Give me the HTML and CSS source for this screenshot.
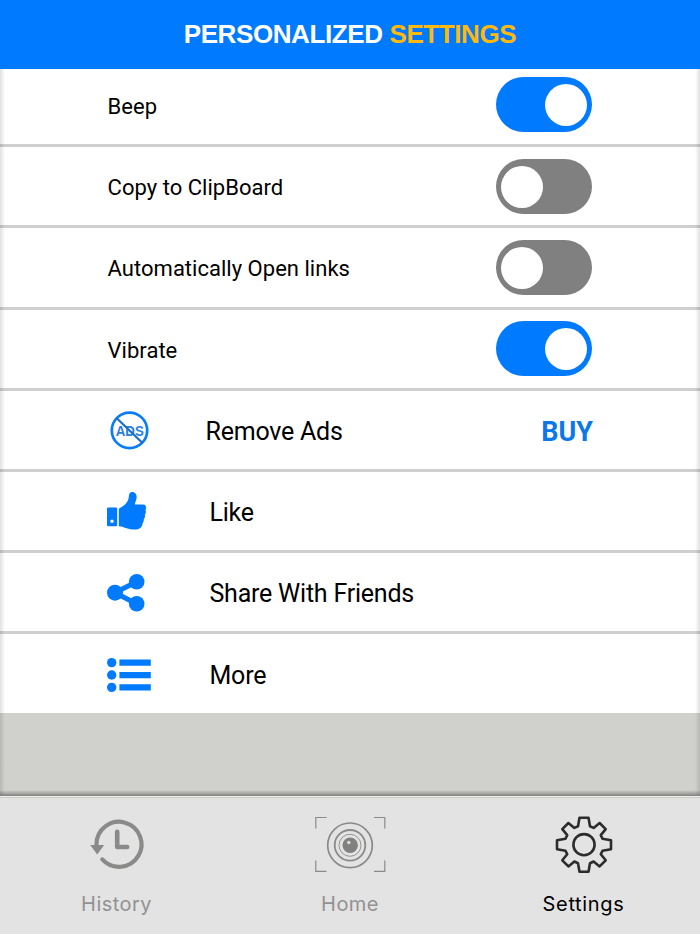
FILE: index.html
```html
<!DOCTYPE html>
<html lang="en">
<head>
<meta charset="UTF-8">
<meta name="viewport" content="width=device-width, initial-scale=1.0">
<title>Personalized Settings</title>
<link rel="stylesheet" href="styles.css">
</head>
<body>
  <div id="screen">
    <header>
      <h1>PERSONALIZED <span>SETTINGS</span></h1>
    </header>

    <div id="settings">
      <div class="row first">
        <span class="label">Beep</span>
        <div class="switch on"></div>
      </div>
      <div class="row">
        <span class="label">Copy to ClipBoard</span>
        <div class="switch"></div>
      </div>
      <div class="row">
        <span class="label">Automatically Open links</span>
        <div class="switch"></div>
      </div>
      <div class="row">
        <span class="label">Vibrate</span>
        <div class="switch on"></div>
      </div>
      <div class="row menu">
        <svg class="icon" width="50" height="44" viewBox="0 0 50 44">
          <circle cx="22.5" cy="21.4" r="17.7" fill="none" stroke="#0a7cf5" stroke-width="2.7"/>
          <text x="8.8" y="26.6" textLength="28" lengthAdjust="spacingAndGlyphs" class="ads">ADS</text>
          <path d="M9.5 9L35.5 34" stroke="#1a6fc9" stroke-width="2.2"/>
        </svg>
        <span class="item ads-item">Remove Ads</span>
        <span class="buy">BUY</span>
      </div>
      <div class="row menu">
        <svg class="icon" width="50" height="44" viewBox="0 0 50 44" fill="#007bff">
          <path fill-rule="evenodd" d="M1.2 17.5H9a1.2 1.2 0 0 1 1.2 1.2V35a1.2 1.2 0 0 1-1.2 1.2H1.2A1.2 1.2 0 0 1 0 35V18.7a1.2 1.2 0 0 1 1.2-1.2zM5 29.6a1.7 1.7 0 1 0 0 3.4a1.7 1.7 0 0 0 0-3.4z"/>
          <path d="M11.8 19.2Q12 18 13.8 17.5C17 16 20.6 12 21.3 9.5C22.3 7.5 21.2 2 25 2C29.8 2 30.4 6.8 29 10.5C28 13 27.8 13.8 28.2 14.5H36C39 14.5 39.5 17.4 38.8 19C38.2 20 39.2 21 38.7 23C38.3 24.3 37.6 24.4 38 26C38.2 28.2 36.6 28.8 36.7 30C37 32 35.8 32.6 35.5 34C34.8 38 32 39.5 28 39.5C21 39.5 18 37 11.8 36.2z"/>
        </svg>
        <span class="item">Like</span>
      </div>
      <div class="row menu">
        <svg class="icon" width="50" height="44" viewBox="0 0 50 44" fill="#007bff">
          <path d="M29.5 10.7L8 21.7L29.5 32.7" fill="none" stroke="#007bff" stroke-width="5"/>
          <circle cx="8" cy="21.7" r="8"/>
          <circle cx="29.7" cy="10.7" r="7.8"/>
          <circle cx="29.7" cy="32.7" r="7.8"/>
        </svg>
        <span class="item">Share With Friends</span>
      </div>
      <div class="row menu last">
        <svg class="icon" width="50" height="44" viewBox="0 0 50 44" fill="#007bff">
          <circle cx="4.7" cy="9.6" r="4.7"/>
          <circle cx="4.7" cy="22" r="4.7"/>
          <circle cx="4.7" cy="34.4" r="4.7"/>
          <path d="M12.4 6.4h31.4v6.4H12.4zM12.4 18.9h31.4v6.3H12.4zM12.4 31.2h31.4v6.4H12.4z"/>
        </svg>
        <span class="item">More</span>
      </div>
    </div>

    <div id="shade"></div>
  </div>

  <nav>
    <a class="tab">
      <svg width="80" height="64" viewBox="1 0 80 64">
        <path d="M21.5 32A22.5 22.5 0 1 1 27.3 46.9" transform="translate(-1 .5)" fill="none" stroke="#8a8a88" stroke-width="4.2" stroke-linecap="round"/>
        <path d="M14.2 33H28.2L21.2 42.5z" fill="#8a8a88"/>
        <path d="M41.2 19.7V35H51.2" fill="none" stroke="#8a8a88" stroke-width="4.6" stroke-linecap="round" stroke-linejoin="round"/>
      </svg>
      <span>History</span>
    </a>
    <a class="tab">
      <svg width="80" height="64" viewBox="0 0 80 64" fill="none" stroke="#8a8a88">
        <path d="M5.8 16.5V5.5H16.5M64 5.5H74.8V16.5M74.8 48.5V59.3H64M16.5 59.3H5.8V48.5" stroke-width="1.2"/>
        <circle cx="40" cy="33.3" r="22.3" stroke-width="1.7"/>
        <circle cx="40" cy="33.3" r="15.3" stroke-width="1.8"/>
        <circle cx="40" cy="33.3" r="11" stroke-width=".9"/>
        <circle cx="40.2" cy="33.3" r="7.7" fill="#80807e" stroke="none"/>
        <circle cx="38.8" cy="30.5" r="1.7" fill="#ddd" stroke="none"/>
      </svg>
      <span>Home</span>
    </a>
    <a class="tab active">
      <svg width="80" height="64" viewBox="-40 -32.7 80 64" fill="none" stroke="#2c2c2c" stroke-width="2.6" stroke-linejoin="round">
        <path d="M-4.5-27H4.5L6-18.5L9.6-16.8L15.6-21.7L21.7-15.6L16.8-9.6L18.5-6L27-4.5V4.5L18.5 6L16.8 9.6L21.7 15.6L15.6 21.7L9.6 16.8L6 18.5L4.5 27H-4.5L-6 18.5L-9.6 16.8L-15.6 21.7L-21.7 15.6L-16.8 9.6L-18.5 6L-27 4.5V-4.5L-18.5-6L-16.8-9.6L-21.7-15.6L-15.6-21.7L-9.6-16.8L-6-18.5z"/>
        <circle r="10.6"/>
      </svg>
      <span>Settings</span>
    </a>
  </nav>
</body>
</html>
```

FILE: styles.css
```css
* {
  box-sizing: border-box;
}
body {
  margin: 0;
  width: 700px;
  height: 934px;
  overflow: hidden;
  font-family: Roboto, Arial, sans-serif;
  background-color: #e3e3e3;
  color: #000;
}
#screen {
  position: relative;
  height: 796px;
  background-color: #d0d1cc;
}
header {
  height: 69px;
  background-color: #007bff;
  display: flex;
  justify-content: center;
}
h1 {
  margin: 0;
  font-family: "Liberation Sans", Arial, sans-serif;
  font-size: 26px;
  letter-spacing: -0.4px;
  line-height: 68px;
  color: #fff;
  white-space: nowrap;
}
h1 span {
  color: #ffb80c;
}
.row {
  height: 81.2px;
  border-bottom: 3px solid #cfcfcf;
  background-color: #fff;
  padding: 0 107px;
  display: flex;
  align-items: center;
}
.first {
  height: 78.2px;
  padding-bottom: 4px;
}
.menu {
  padding-top: 2px;
}
.last {
  height: 78.5px;
  border-bottom: none;
}
.label {
  flex: 1;
  font-size: 22px;
  padding-top: 3px;
  padding-left: 0.6px;
  letter-spacing: 0.02px;
}
.switch {
  width: 96px;
  height: 55px;
  border-radius: 28px;
  background-color: #808080;
  padding: 7px 5px;
  margin-right: 1px;
  display: flex;
}
.switch::before {
  content: "";
  width: 42px;
  height: 42px;
  border-radius: 50%;
  background-color: #fff;
}
.switch.on {
  background-color: #007bff;
  justify-content: flex-end;
}
.icon {
  width: 50px;
  margin-right: 52.5px;
}
.ads {
  font: bold 14.5px "Liberation Sans", Arial, sans-serif;
  fill: #2a7fdc;
}
.item {
  flex: 1;
  font-size: 25px;
  letter-spacing: -0.22px;
  padding-top: 1px;
}
.ads-item {
  margin-left: -4px;
}
.buy {
  font-size: 27px;
  font-weight: bold;
  color: #0a78e8;
  padding-top: 3px;
}
/* soft edge round the list */
#shade {
  position: absolute;
  top: 69px;
  right: 0;
  bottom: 0;
  left: 0;
  pointer-events: none;
  border-bottom: 1px solid #858583;
  background:
    linear-gradient(to right, rgba(0, 0, 0, .12), transparent 5px),
    linear-gradient(to left, rgba(0, 0, 0, .12), transparent 5px),
    linear-gradient(to top, rgba(0, 0, 0, .3), transparent 5px);
}
nav {
  height: 138px;
  border-top: 1px solid #f0f0ee;
  box-shadow: inset 0 1px #cbcbc6;
  padding: 15px 0 0;
  display: grid;
  grid-template-columns: 233px 234px 233px;
}
.tab {
  display: flex;
  flex-direction: column;
  align-items: center;
  font-family: Inter, Arial, sans-serif;
  font-size: 20px;
  letter-spacing: 0.45px;
  color: #929292;
}
.tab span {
  line-height: 24px;
  margin-top: 16px;
}
.active {
  color: #000;
  letter-spacing: 0.65px;
}
```
